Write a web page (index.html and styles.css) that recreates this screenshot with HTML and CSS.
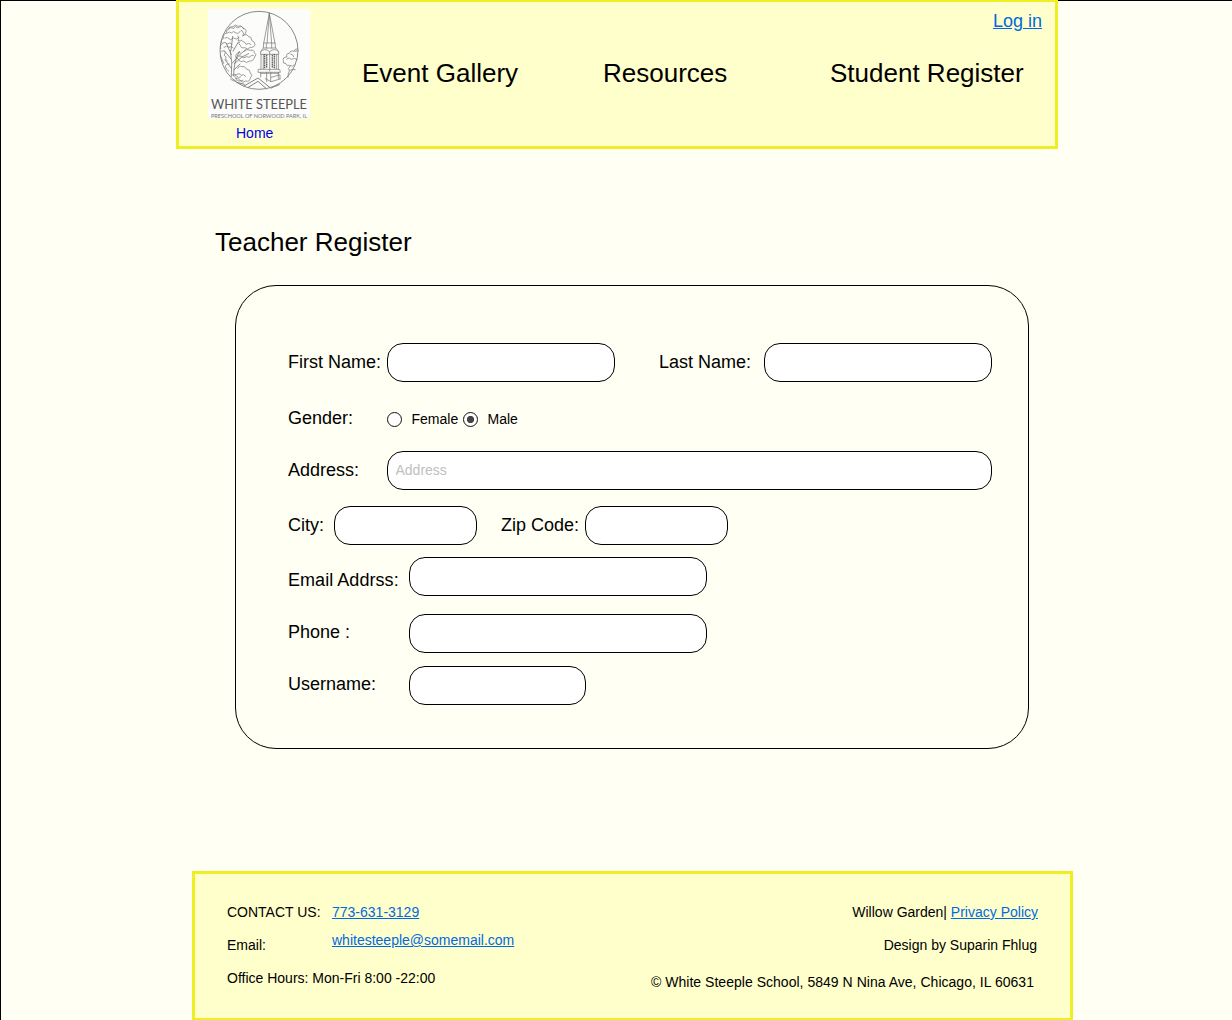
FILE: index.html
```html
<!DOCTYPE html>
<html lang="en">
<head>
<meta charset="utf-8">
<title>Teacher Register</title>
<link rel="stylesheet" href="styles.css">
</head>
<body>
<div class="page">
  <header class="header">
    <a class="home" href="#">
      <svg class="logo" width="102" height="110" viewBox="0 0 102 110" role="img" aria-label="White Steeple">
        <rect width="102" height="110" fill="#fcfcfa"/>
        <g transform="translate(-38 -9) scale(.33333)" fill="none" stroke="#808080" stroke-width="2.3" stroke-linejoin="round" stroke-linecap="round">
          <circle cx="267" cy="151" r="117" stroke="#888" stroke-width="3"/>
          <g transform="translate(138 24)">
            <!-- left tree: crown -->
            <path d="M14 122q-4-10 5-14q-8-11 4-17q-3-13 8-15q-2-11 8-12q1-10 12-8q7-9 15-1q11-4 15 6q11 1 9 11q-1 9-10 10M36 62q4-7 11-2t11-5q5 8 13 2t12 6M33 76q7-8 13-1q6-8 13-1t13-3t11 7M27 90q8-5 12 2t13-2q10 7 17-1M20 105q8-5 14 3q8-7 14 0M24 118q8-8 15 0q9-6 13 2M15 130q9-4 13 4q-8 9 2 13q-4 8 4 12M13 142q6 12 10 24M66 84q5 8 0 14q7 2 12-1"/>
            <!-- left tree: right-hand clusters -->
            <path d="M80 84q11-9 17 1q11 1 10 12q9 3 10 12q-2 11-14 9q-8 9-17 1q-11 3-13-7q-8-4-3-10M80 100q8 2 10 9q8-6 15 0M84 130q9-10 18-3q13-3 13 7q9 6 1 13q-4 13-15 12q-10 9-18 0q-12 5-16-6q-12-3-7-12q3-9 12-8M70 144q9-2 12 6q9-7 17-2q7-7 13-6"/>
            <!-- left tree: lower foliage -->
            <path d="M65 181q3-9 13-5q9-3 13 7q12 1 12 12q9 7 0 15q-2 13-14 9q-8 8-15 0q-11 2-13-9q-9-4-2-11M62 199q9-5 13 3q9-5 14 3M48 201q9-5 14 3t12 3M57 213q9-5 13 2t11 2M44 214q9 8 17 5M40 168q-10-2-12 8q3 9 10 14"/>
            <!-- left tree: trunk and branches -->
            <path stroke="#707070" d="M46 205q4-43-3-78M53 204q-1-40 17-74M45 153L25 128M46 140l-15-34M45 127l5-42M49 165l23-26l17-14M55 167l23-20l20-10M46 181l-19-26M54 186l18-18M51 130l16-28"/>
          </g>
          <!-- right tree -->
          <path d="M382 146q-9 2-10 8q-11-4-14 6q-11 0-7 11q-14 0-11 11q-2 10 8 9q2 8 11 5q9 7 14-2M350 177q8-7 14 1q10-7 18 1M361 197q-9 8-3 16q-5 8-4 19M360 211q8-5 16-2M362 162q8 1 9 8M373 153q5 3 8 0"/>
          <!-- spire -->
          <path d="M298 40L281 130M298 40l17 90M298 40l-7 91M298 40l7 91M281 130l-1 14h37l-2-14zM289 132v12M305 132v12"/>
          <!-- belfry -->
          <path d="M280 144l-8 11v8h54v-8l-9-11M273 163v44M280 163v44M299 155v58M319 163v44M325 163v44M272 155q12-13 27 0q14-13 27 0M266 208h63l2 9h-66zM272 217v14M325 217v18M290 217v28M302 217v26M286 236l17 9l27-8M272 220h54M304 232l26-8v13"/>
          <path stroke="#606060" stroke-width="4" stroke-dasharray="4 1.5" stroke-linecap="butt" d="M284 162v44M290 164v40M307 164v40M313 162v43"/>
          <!-- gable -->
          <path stroke-width="3" d="M222 258l42-24l39 31M235 262l29-18l25 22M200 247l23 6M305 263l23-9"/>
        </g>
        <text class="logo-name" x="3" y="100" textLength="96" lengthAdjust="spacingAndGlyphs">WHITE STEEPLE</text>
        <text class="logo-sub" x="3" y="109" textLength="96" lengthAdjust="spacingAndGlyphs">PRESCHOOL OF NORWOOD PARK, IL</text>
      </svg>
      <span>Home</span>
    </a>
    <nav class="nav">
      <span>Event Gallery</span>
      <span>Resources</span>
      <span>Student Register</span>
    </nav>
    <a class="link login" href="#">Log in</a>
  </header>

  <main class="main">
    <h1 class="title">Teacher Register</h1>
    <form class="form">
      <div class="row row-name">
        <label class="label label-md" for="first">First Name:</label>
        <input class="field field-md" id="first">
        <label class="label label-last" for="last">Last Name:</label>
        <input class="field field-md" id="last">
      </div>
      <div class="row row-gender">
        <span class="label label-md">Gender:</span>
        <label class="option"><input class="radio" type="radio" name="gender">Female</label>
        <label class="option"><input class="radio" type="radio" name="gender" checked>Male</label>
      </div>
      <div class="row row-address">
        <label class="label label-md" for="address">Address:</label>
        <input class="field field-full" id="address" placeholder="Address">
      </div>
      <div class="row row-city">
        <label class="label label-city" for="city">City:</label>
        <input class="field field-sm" id="city">
        <label class="label label-zip" for="zip">Zip Code:</label>
        <input class="field field-sm" id="zip">
      </div>
      <div class="row row-email">
        <label class="label label-lg" for="email">Email Addrss:</label>
        <input class="field field-lg" id="email">
      </div>
      <div class="row row-phone">
        <label class="label label-lg" for="phone">Phone :</label>
        <input class="field field-lg" id="phone">
      </div>
      <div class="row row-user">
        <label class="label label-lg" for="user">Username:</label>
        <input class="field field-user" id="user">
      </div>
    </form>
  </main>

  <footer class="footer">
    <div class="contact">
      <div class="contact-row"><span>CONTACT US:</span><a class="link" href="#">773-631-3129</a></div>
      <div class="contact-row"><span>Email:</span><a class="link mail" href="#">whitesteeple@somemail.com</a></div>
      <div>Office Hours: Mon-Fri 8:00 -22:00</div>
    </div>
    <div class="legal">
      <div>Willow Garden| <a class="link" href="#">Privacy Policy</a></div>
      <div class="design">Design by Suparin Fhlug</div>
      <div class="copyright">© White Steeple School, 5849 N Nina Ave, Chicago, IL 60631</div>
    </div>
  </footer>
</div>
</body>
</html>
```
FILE: styles.css
```css
* { box-sizing: border-box; }

body {
  margin: 0;
  height: 1020px;
  overflow: hidden;
  font: 14px/16px "Liberation Sans", Arial, sans-serif;
  color: #000;
}

.page {
  display: flex;
  flex-direction: column;
  align-items: flex-start;
  height: 1020px;
  background: #fffff3;
  border-top: 1px solid #000;
  border-left: 1px solid #000;
  padding-left: 175px;
}

.link { color: #0069e0; text-decoration: underline; }

/* Header */
.header {
  display: flex;
  flex: none;
  align-items: flex-start;
  width: 882px;
  height: 149px;
  padding: 7px 13px 0 29px;
  background: #ffffcc;
  border: 3px solid #eeee22;
  border-top-width: 2px;
  margin-top: -1px;
  position: relative;
}

.home {
  display: flex;
  flex-direction: column;
  gap: 6px;
  width: 102px;
  color: #0000ee;
  text-decoration: none;
}
.home span { padding-left: 28px; }

.logo { display: block; overflow: visible; }
.logo-name { font: 400 14.3px Lato, sans-serif; fill: #555; }
.logo-sub { font: 400 6.4px Lato, sans-serif; fill: #777; }

.nav {
  display: grid;
  grid-template-columns: 241px 227px 163px;
  margin: 49px 0 0 52px;
  font-size: 26px;
  line-height: 30px;
  white-space: nowrap;
}

.login {
  margin: 2px 0 0 auto;
  font-size: 18px;
  line-height: 20px;
  white-space: nowrap;
}

/* Registration form */
.title {
  margin: 78px 0 28px 39px;
  font-size: 26px;
  line-height: 30px;
  font-weight: normal;
}

.form {
  width: 794px;
  height: 464px;
  margin-left: 59px;
  padding: 57px 0 0 52px;
  border: 1px solid #000;
  border-radius: 41px;
}

.row { display: flex; align-items: flex-start; }
.row-name { margin-bottom: 26px; }
.row-gender { margin-bottom: 23px; }
.row-address { margin-bottom: 16px; }
.row-city { margin-bottom: 12px; }
.row-email { margin-bottom: 18px; }
.row-phone { margin-bottom: 13px; }

.label {
  flex: none;
  padding-top: 9px;
  font-size: 18px;
  line-height: 20px;
  white-space: nowrap;
}
.label-md { width: 99px; }
.label-lg { width: 121px; }
.label-last { width: 105px; margin-left: 44px; }
.label-city { width: 46px; }
.label-zip { width: 84px; margin-left: 24px; }
.row-gender .label { padding-top: 0; }
.row-email .label { padding-top: 13px; letter-spacing: .05px; }
.row-phone .label, .row-user .label { padding-top: 8px; }

.field {
  flex: none;
  height: 39px;
  margin: 0;
  padding: 0 7.5px 2px;
  border: 1px solid #000;
  border-radius: 16px;
  background: #fff;
  font: inherit;
}
.field::placeholder { color: #c0c0c0; opacity: 1; }
.field-sm { width: 143px; }
.field-user { width: 177px; }
.field-md { width: 228px; }
.field-lg { width: 298px; }
.field-full { width: 605px; }

.option {
  display: flex;
  align-items: center;
  width: 76px;
  padding-top: 3px;
}
.radio {
  appearance: none;
  width: 15px;
  height: 15px;
  margin: 0 9.5px 0 0;
  border: 1px solid #111;
  border-radius: 50%;
  background: #fff;
}
.radio:checked { background: radial-gradient(circle, #444 3.3px, #fff 4px); }

/* Footer */
.footer {
  display: flex;
  flex: none;
  justify-content: space-between;
  width: 881px;
  height: 150px;
  margin: 122px 0 0 16px;
  padding: 30px 32px 0;
  background: #ffffcc;
  border: 3px solid #eeee22;
}

.contact, .legal {
  display: flex;
  flex-direction: column;
  gap: 17px;
  white-space: nowrap;
}
.contact-row { display: grid; grid-template-columns: 105px auto; }
.mail { margin-top: -5px; }
.legal { align-items: flex-end; }
.design { padding-right: 1px; }
.copyright { padding: 4px 4px 0 0; letter-spacing: .025px; }
```
